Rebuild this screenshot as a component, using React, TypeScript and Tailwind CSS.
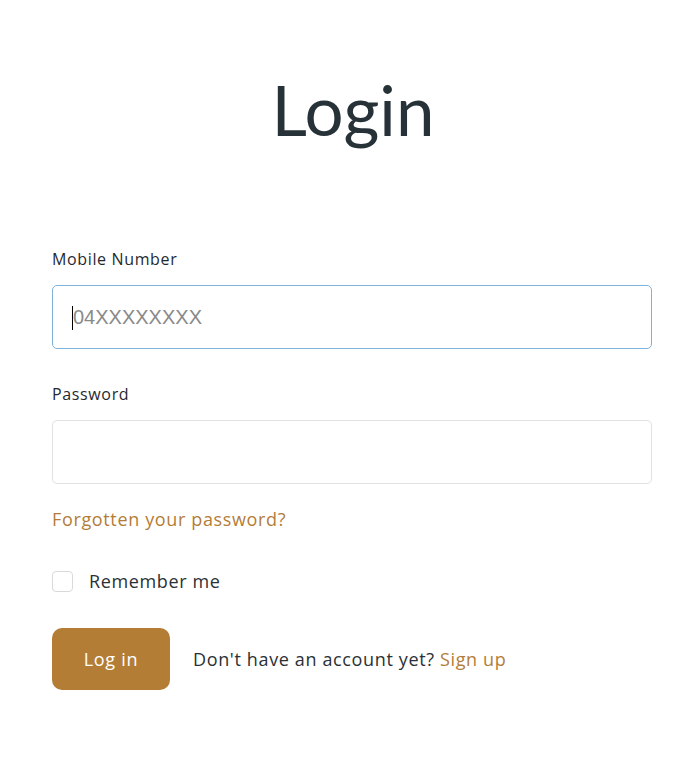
import React from "react";

export default function App() {
  return (
    <div className="min-h-[769px] w-full bg-white font-['Open_Sans',sans-serif] tracking-[0.04em] text-[#263238]">
      <div className="ml-[52px] w-[600px] pt-[60px]">
        <h1 className="text-center font-['Lato',sans-serif] text-[69px] leading-[100px] font-normal tracking-normal text-[#263238] pl-[2px]">Login</h1>
        <div className="mt-[87px]">
          <label className="block text-[16px] leading-[24px] text-[#1f2a30]">Mobile Number</label>
          <div className="relative mt-[14px]">
            <input
              type="text"
              placeholder="04XXXXXXXX"
              className="block h-[64px] w-full rounded-[5px] border border-[#7fb3db] px-[20px] font-['Liberation_Sans',sans-serif] text-[20px] tracking-normal text-[#333] outline-none placeholder:text-[#8a8a8a]"
            />
            <span className="pointer-events-none absolute left-[20px] top-[21px] h-[24px] w-px bg-black" />
          </div>
        </div>
        <div className="mt-[33px]">
          <label className="block text-[16px] leading-[24px] text-[#1f2a30]">Password</label>
          <input
            type="password"
            className="mt-[14px] block h-[64px] w-full rounded-[5px] border border-[#e2e2e2] px-[20px] text-[20px] outline-none"
          />
        </div>
        <div className="mt-[21px] text-[18px] leading-[28px] text-[#b37d38]">Forgotten your password?</div>
        <div className="mt-[34px] flex items-center gap-[16px]">
          <span className="block h-[21px] w-[21px] rounded-[4px] border border-[#d9d9d9] bg-white" />
          <span className="text-[18px] leading-[28px] text-[#2a3136]">Remember me</span>
        </div>
        <div className="mt-[33px] flex items-center gap-[23px]">
          <button className="h-[62px] w-[118px] rounded-[10px] bg-[#b47d36] text-[18px] tracking-[0.04em] text-white">Log in</button>
          <div className="text-[18px] leading-[28px] text-[#2a3136]">
            Don't have an account yet? <span className="text-[#b37d38]">Sign up</span>
          </div>
        </div>
      </div>
    </div>
  );
}
